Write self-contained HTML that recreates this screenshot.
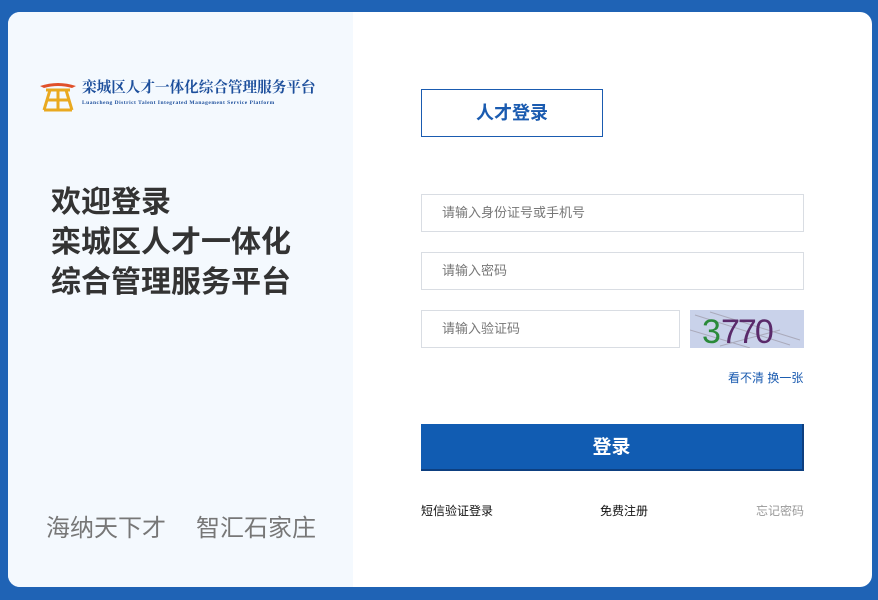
<!DOCTYPE html>
<html><head><meta charset="utf-8"><style>
*{margin:0;padding:0;box-sizing:border-box}
body{width:878px;height:600px;overflow:hidden;background:#1f63b5;font-family:"Liberation Sans","Noto Sans CJK SC",sans-serif;position:relative}
.card{position:absolute;left:8px;top:12px;width:864px;height:575px;background:#fff;border-radius:12px;overflow:hidden}
.left{position:absolute;left:0;top:0;width:345px;height:100%;background:#f4f9fe}
.logo{position:absolute;left:30px;top:66px}
.t1{position:absolute;left:74px;top:64px;font-size:14.6px;font-weight:bold;color:#1d4f9c;font-family:"Noto Serif CJK SC",serif;white-space:nowrap}
.t2{position:absolute;left:74px;top:88px;font-size:5.5px;color:#1d4f9c;font-family:"Liberation Serif",serif;font-weight:bold;letter-spacing:0.5px;white-space:nowrap}
.welcome{position:absolute;left:43px;top:171px;font-size:30px;font-weight:bold;color:#333;line-height:40px;white-space:nowrap}
.slogan{position:absolute;left:38px;top:496px;font-size:24px;color:#777;white-space:nowrap}
.tab{position:absolute;left:413px;top:77px;width:182px;height:48px;border:1px solid #1a5bb0;color:#1a5bb0;font-size:18px;font-weight:bold;text-align:center;line-height:46px}
.inp{position:absolute;left:413px;height:38px;border:1px solid #d9dde3;font-size:13px;color:#777;padding-left:20px;line-height:36px}
.cap{position:absolute;left:682px;top:298px;width:114px;height:38px;background:#c9d2ea}
.links{position:absolute;left:720px;top:357px;font-size:12px;color:#1a5bb0}
.btn{position:absolute;left:413px;top:412px;width:383px;height:47px;background:#115cb2;color:#fff;font-size:19px;font-weight:bold;text-align:center;line-height:47px;border-right:2px solid #0d3f80;border-bottom:2px solid #0d3f80}
.b{position:absolute;top:490px;font-size:12px;color:#111}
</style></head><body>
<div class="card">
<div class="left">
<svg class="logo" width="40" height="36" viewBox="0 0 40 36"><path d="M2 8 Q20 2 38 8 L34 10 Q20 6 6 10Z" fill="#e0502a"/><path d="M8 12 H32 M12 12 L6 32 M28 12 L34 32 M20 12 V32 M10 22 H30 M6 32 H34" stroke="#e9a920" stroke-width="3" fill="none"/></svg>
<div class="t1">栾城区人才一体化综合管理服务平台</div>
<div class="t2">Luancheng District Talent Integrated Management Service Platform</div>
<div class="welcome">欢迎登录<br>栾城区人才一体化<br>综合管理服务平台</div>
<div class="slogan">海纳天下才<span style="display:inline-block;width:30px"></span>智汇石家庄</div>
</div>
<div class="tab">人才登录</div>
<div class="inp" style="top:182px;width:383px">请输入身份证号或手机号</div>
<div class="inp" style="top:240px;width:383px">请输入密码</div>
<div class="inp" style="top:298px;width:259px">请输入验证码</div>
<div class="cap"><svg width="114" height="38"><path d="M5 5 L100 35 M20 2 L110 30 M0 20 L60 38 M30 36 L90 20" stroke="#aab" stroke-width="1"/><text x="12" y="33" font-size="34" font-family="Liberation Sans" fill="#2a8a3a">3</text><text x="31" y="33" font-size="34" font-family="Liberation Sans" fill="#5a2a6a" letter-spacing="-2">770</text></svg></div>
<div class="links">看不清 换一张</div>
<div class="btn">登录</div>
<div class="b" style="left:413px">短信验证登录</div>
<div class="b" style="left:592px">免费注册</div>
<div class="b" style="left:748px;color:#999">忘记密码</div>
</div>
</body></html>
